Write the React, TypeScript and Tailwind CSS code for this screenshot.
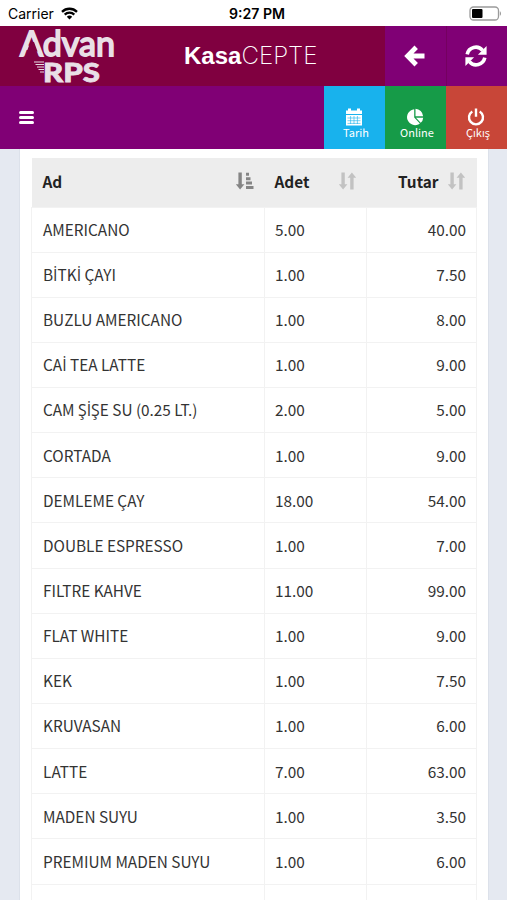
import React from "react";

const rows = [
  ["AMERICANO", "5.00", "40.00"],
  ["BİTKİ ÇAYI", "1.00", "7.50"],
  ["BUZLU AMERICANO", "1.00", "8.00"],
  ["CAİ TEA LATTE", "1.00", "9.00"],
  ["CAM ŞİŞE SU (0.25 LT.)", "2.00", "5.00"],
  ["CORTADA", "1.00", "9.00"],
  ["DEMLEME ÇAY", "18.00", "54.00"],
  ["DOUBLE ESPRESSO", "1.00", "7.00"],
  ["FILTRE KAHVE", "11.00", "99.00"],
  ["FLAT WHITE", "1.00", "9.00"],
  ["KEK", "1.00", "7.50"],
  ["KRUVASAN", "1.00", "6.00"],
  ["LATTE", "7.00", "63.00"],
  ["MADEN SUYU", "1.00", "3.50"],
  ["PREMIUM MADEN SUYU", "1.00", "6.00"],
  ["", "", ""],
];

function WifiIcon() {
  return (
    <svg className="ml-[7px] h-[13px] w-[17px]" viewBox="0 0 17 13" fill="none" stroke="#000" strokeWidth="2.3">
      <path d="M1 4.8a10.8 10.8 0 0 1 15 0M3.7 7.6a6.9 6.9 0 0 1 9.6 0" />
      <path d="M8.5 12.4 5.8 9.7a3.9 3.9 0 0 1 5.4 0Z" fill="#000" stroke="none" />
    </svg>
  );
}

function BatteryIcon() {
  return (
    <svg className="h-[15px] w-[33px]" viewBox="0 0 33 15">
      <rect x="1" y="1" width="28.5" height="13" rx="3.5" fill="#fff" stroke="#9b9b9b" strokeWidth="1.3" />
      <rect x="3" y="3" width="10.5" height="9" rx="1" fill="#000" />
      <path d="M30.8 5.2c1.6.6 1.6 4 0 4.6Z" fill="#9b9b9b" />
    </svg>
  );
}

function Logo() {
  return (
    <svg className="h-[60px] w-[128px]" viewBox="0 0 128 60" fill="#e9dfe6" aria-label="Advan RPS">
      <text x="20" y="29.5" textLength="95" lengthAdjust="spacingAndGlyphs" stroke="#e9dfe6" strokeWidth="1.8" className="font-['Lato',sans-serif] text-[35px] font-normal">Advan</text>
      <path d="M30.4 16h3.6l3.6 9.5H26.8Z" fill="#800040" />
      <path d="M34 36h10M35.5 38.5h8.5M37 41h7M38.5 43.5h5.5M40 46h4" stroke="#e9dfe6" strokeWidth="1" />
      <text x="43" y="55.5" textLength="57" lengthAdjust="spacingAndGlyphs" stroke="#e9dfe6" strokeWidth=".8" className="font-['Lato',sans-serif] text-[27px] font-black">RPS</text>
    </svg>
  );
}

function SortIcon() {
  return (
    <svg className="h-[18px] w-[17px] shrink-0" viewBox="0 0 17 18" fill="#c2c2c2">
      <path d="M2.4 .5h3.4v11.8h2.6L4.1 17.6-.2 12.3h2.6ZM11.2 17.5h3.4V5.8h2.6L12.9.4 8.6 5.8h2.6Z" />
    </svg>
  );
}

function SortAscIcon() {
  return (
    <svg className="h-[18px] w-[18px] shrink-0" viewBox="0 0 18 18" fill="#858585">
      <path d="M2.4 .5h3.4v11.8h2.6L4.1 17.6-.2 12.3h2.6ZM10 .8h3v3h-3ZM10 5.2h4.5v3H10ZM10 9.6h6v3h-6ZM10 14h7.5v3H10Z" />
    </svg>
  );
}

function ArrowIcon() {
  return (
    <svg className="h-[22px] w-[22px]" viewBox="0 0 22 22" fill="none" stroke="#fff" strokeWidth="4.8">
      <path d="M12.2 2.2 3.6 11l8.6 8.8M4.5 11H20.5" />
    </svg>
  );
}

function RefreshIcon() {
  return (
    <svg className="h-[22px] w-[22px]" viewBox="0 0 22 22">
      <path d="M2.2 9.3A8.8 8.8 0 0 1 17.6 5.4M19.8 12.7A8.8 8.8 0 0 1 4.4 16.6" fill="none" stroke="#fff" strokeWidth="3.6" />
      <path d="M21.6 1v8.7h-8.7ZM.4 21v-8.7h8.7Z" fill="#fff" />
    </svg>
  );
}

function CalendarIcon() {
  return (
    <svg className="h-[18px] w-[18px]" viewBox="0 0 18 18">
      <path d="M1 2.5h2V.5h3v2h6v-2h3v2h2V6H1Z" fill="#fff" />
      <path d="M1 7h16v10.5H1Z" fill="#fff" />
      <path d="M2.5 10h13M2.5 12.7h13M2.5 15.4h13M5.6 8v8M9 8v8M12.4 8v8" stroke="#18b2ed" strokeWidth=".6" />
    </svg>
  );
}

function PieIcon() {
  return (
    <svg className="h-[18px] w-[18px]" viewBox="0 0 18 18" fill="#fff">
      <path d="M8.2 1.2v8.3l5.7 6A8 8 0 1 1 8.2 1.2Z" />
      <path d="M9.5.8a8 8 0 0 1 7.6 7.5H9.5ZM10 9.7h7.2a7 7 0 0 1-2.5 5Z" />
    </svg>
  );
}

function PowerIcon() {
  return (
    <svg className="h-[18px] w-[18px]" viewBox="0 0 18 18" fill="none" stroke="#fff" strokeWidth="2.4">
      <path d="M5.3 3.4a7 7 0 1 0 7.4 0M9 .5v8.3" />
    </svg>
  );
}

function Action({ label, color, children }: { label: string; color: string; children: React.ReactNode }) {
  return (
    <div className={`flex h-full w-[61px] flex-col items-center pt-[22px] text-white ${color}`}>
      <div className="mr-[2px]">{children}</div>
      <span className="-mt-px ml-[3px] text-[11px] leading-[14px]">{label}</span>
    </div>
  );
}

// The CJK face lacks these Turkish capitals, so they take another face.
function ItemName({ text }: { text: string }) {
  return (
    <>
      {text.split(/([İŞ]+)/).map((part, i) =>
        /[İŞ]/.test(part) ? <span key={i} className="font-['Open_Sans',sans-serif] text-[15.8px] leading-[0]">{part}</span> : part
      )}
    </>
  );
}

export default function App() {
  return (
    <div className="flex h-[900px] w-[507px] flex-col overflow-hidden bg-[#e5e9f1] font-['Noto_Sans_CJK_SC','Open_Sans',sans-serif]">
      <div className="grid h-[26px] shrink-0 grid-cols-3 items-center bg-white pt-px font-['Inter',sans-serif] text-black">
        <div className="flex items-center pl-2 text-[14px]">Carrier<WifiIcon /></div>
        <div className="pl-[7px] text-center text-[14.1px] font-semibold whitespace-nowrap">9:27 PM</div>
        <div className="flex justify-end pr-[5px]"><BatteryIcon /></div>
      </div>
      <header className="flex h-[60px] shrink-0 bg-[#800040] text-white">
        <div className="w-[128px]"><Logo /></div>
        <div className="flex flex-1 items-center pl-[56px] font-['Liberation_Sans',sans-serif] text-[24px]">
          <b>Kasa</b><span className="font-['Inter',sans-serif] text-[24.2px] font-extralight">CEPTE</span>
        </div>
        <div className="flex w-[61px] items-center justify-center bg-[#800075] pr-[2px]"><ArrowIcon /></div>
        <div className="flex w-[61px] items-center justify-center border-l border-[#750060] bg-[#800075] pr-[3px]"><RefreshIcon /></div>
      </header>
      <nav className="flex h-[63px] shrink-0 items-center bg-[#800075]">
        <div className="ml-[19px] flex w-[15px] flex-col gap-[2px]">
          <i className="h-[3px] rounded-xs bg-white" /><i className="h-[3px] rounded-xs bg-white" /><i className="h-[3px] rounded-xs bg-white" />
        </div>
        <div className="ml-auto flex h-full">
          <Action label="Tarih" color="bg-[#18b2ed]"><CalendarIcon /></Action>
          <Action label="Online" color="bg-[#169b48]"><PieIcon /></Action>
          <Action label="Çıkış" color="bg-[#c84638]"><PowerIcon /></Action>
        </div>
      </nav>
      <main className="mr-[18px] ml-[19px] flex-1 border-x border-[#dce1ea] bg-white pt-[9px] pr-3 pl-3">
        <table className="-ml-px w-[445px] table-fixed border-collapse text-[15.35px] text-[#333]">
          <colgroup><col className="w-[233px]" /><col className="w-[102px]" /><col className="w-[110px]" /></colgroup>
          <thead>
            <tr className="h-[49px] bg-[#ededed] text-left text-[#222]">
              <th className="p-0 pr-[11px] pb-[2px] pl-[11px]"><div className="flex items-center justify-between leading-none">Ad<SortAscIcon /></div></th>
              <th className="p-0 pr-[11px] pb-[2px] pl-[10px]"><div className="flex items-center justify-between leading-none">Adet<SortIcon /></div></th>
              <th className="p-0 pr-3 pb-[2px]"><div className="flex items-center justify-end gap-[9px] leading-none">Tutar<SortIcon /></div></th>
            </tr>
          </thead>
          <tbody>
            {rows.map((r, i) => (
              <tr key={i} className="h-[45.15px] leading-none">
                <td className="border border-[#f2f2f2] p-0 pl-[11px] whitespace-nowrap"><ItemName text={r[0]} /></td>
                <td className="border border-[#f2f2f2] p-0 pl-[10px]">{r[1]}</td>
                <td className="border border-[#f2f2f2] p-0 pr-[10px] text-right">{r[2]}</td>
              </tr>
            ))}
          </tbody>
        </table>
      </main>
    </div>
  );
}
